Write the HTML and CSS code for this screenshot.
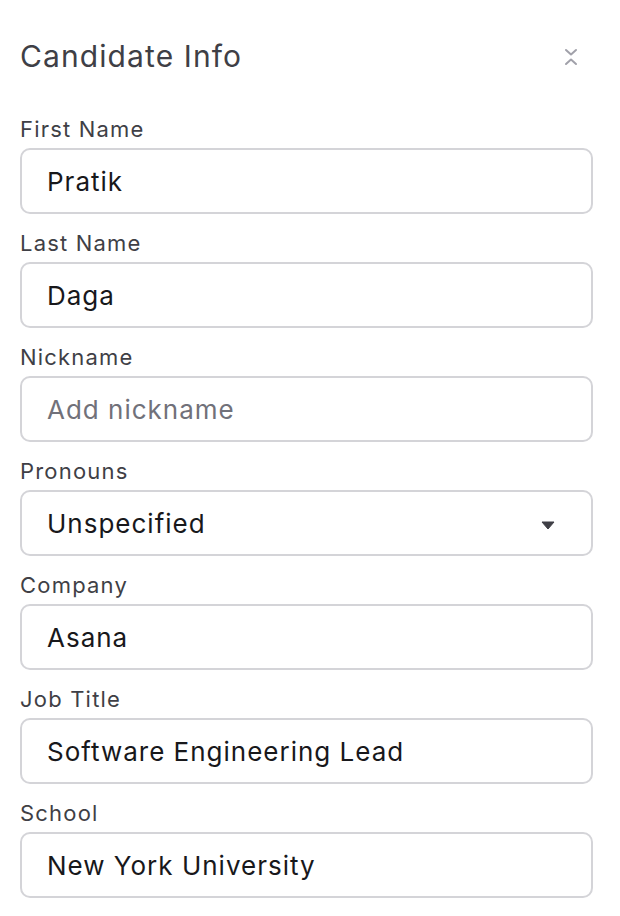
FILE: index.html
```html
<!DOCTYPE html>
<html>
<head>
<meta charset="utf-8">
<link rel="stylesheet" href="styles.css">
</head>
<body>
<div class="panel">
  <div class="header">
    <h1 class="title">Candidate Info</h1>
    <svg class="collapse" width="16" height="22" viewBox="0 0 16 22" fill="none" stroke="#a1a1aa" stroke-width="2" stroke-linecap="round" stroke-linejoin="round">
      <path d="M3 4 L8 8.5 L13 4"/>
      <path d="M3 18 L8 13.5 L13 18"/>
    </svg>
  </div>
  <div class="field">
    <label class="label">First Name</label>
    <div class="input">Pratik</div>
  </div>
  <div class="field">
    <label class="label">Last Name</label>
    <div class="input">Daga</div>
  </div>
  <div class="field">
    <label class="label">Nickname</label>
    <div class="input placeholder">Add nickname</div>
  </div>
  <div class="field">
    <label class="label">Pronouns</label>
    <div class="input select">
      <span>Unspecified</span>
      <svg class="caret" width="14" height="9" viewBox="0 0 14 9"><path d="M1 1 H13 L7 8 Z" fill="#3f3f46" stroke="#3f3f46" stroke-width="1" stroke-linejoin="round"/></svg>
    </div>
  </div>
  <div class="field">
    <label class="label">Company</label>
    <div class="input">Asana</div>
  </div>
  <div class="field">
    <label class="label">Job Title</label>
    <div class="input">Software Engineering Lead</div>
  </div>
  <div class="field">
    <label class="label">School</label>
    <div class="input">New York University</div>
  </div>
</div>
</body>
</html>
```

FILE: styles.css
```css
* { box-sizing: border-box; }
html, body { margin: 0; padding: 0; background: #ffffff; }
body { font-family: Inter, "Noto Sans", sans-serif; }
.panel {
  width: 620px;
  padding: 38px 27px 0 20px;
}
.header {
  display: flex;
  align-items: center;
  justify-content: space-between;
  height: 36px;
  margin-bottom: 43px;
}
.title {
  margin: 0;
  font-size: 30px;
  line-height: 36px;
  font-weight: 400;
  letter-spacing: 1.1px;
  color: #3f3f46;
}
.collapse { margin-right: 14px; margin-top: 2px; }
.field {
  display: flex;
  flex-direction: column;
  margin-bottom: 17px;
}
.label {
  font-size: 22px;
  line-height: 24px;
  letter-spacing: 1.2px;
  color: #3f3f46;
  margin-bottom: 7px;
}
.input {
  height: 66px;
  border: 2px solid #d4d4d8;
  border-radius: 10px;
  padding: 2px 24px 0 25px;
  display: flex;
  align-items: center;
  font-size: 26px;
  line-height: 32px;
  letter-spacing: 1px;
  color: #18181b;
}
.placeholder { color: #71717a; }
.select { justify-content: space-between; padding-right: 36px; }
.caret { margin-top: 2px; }
```
